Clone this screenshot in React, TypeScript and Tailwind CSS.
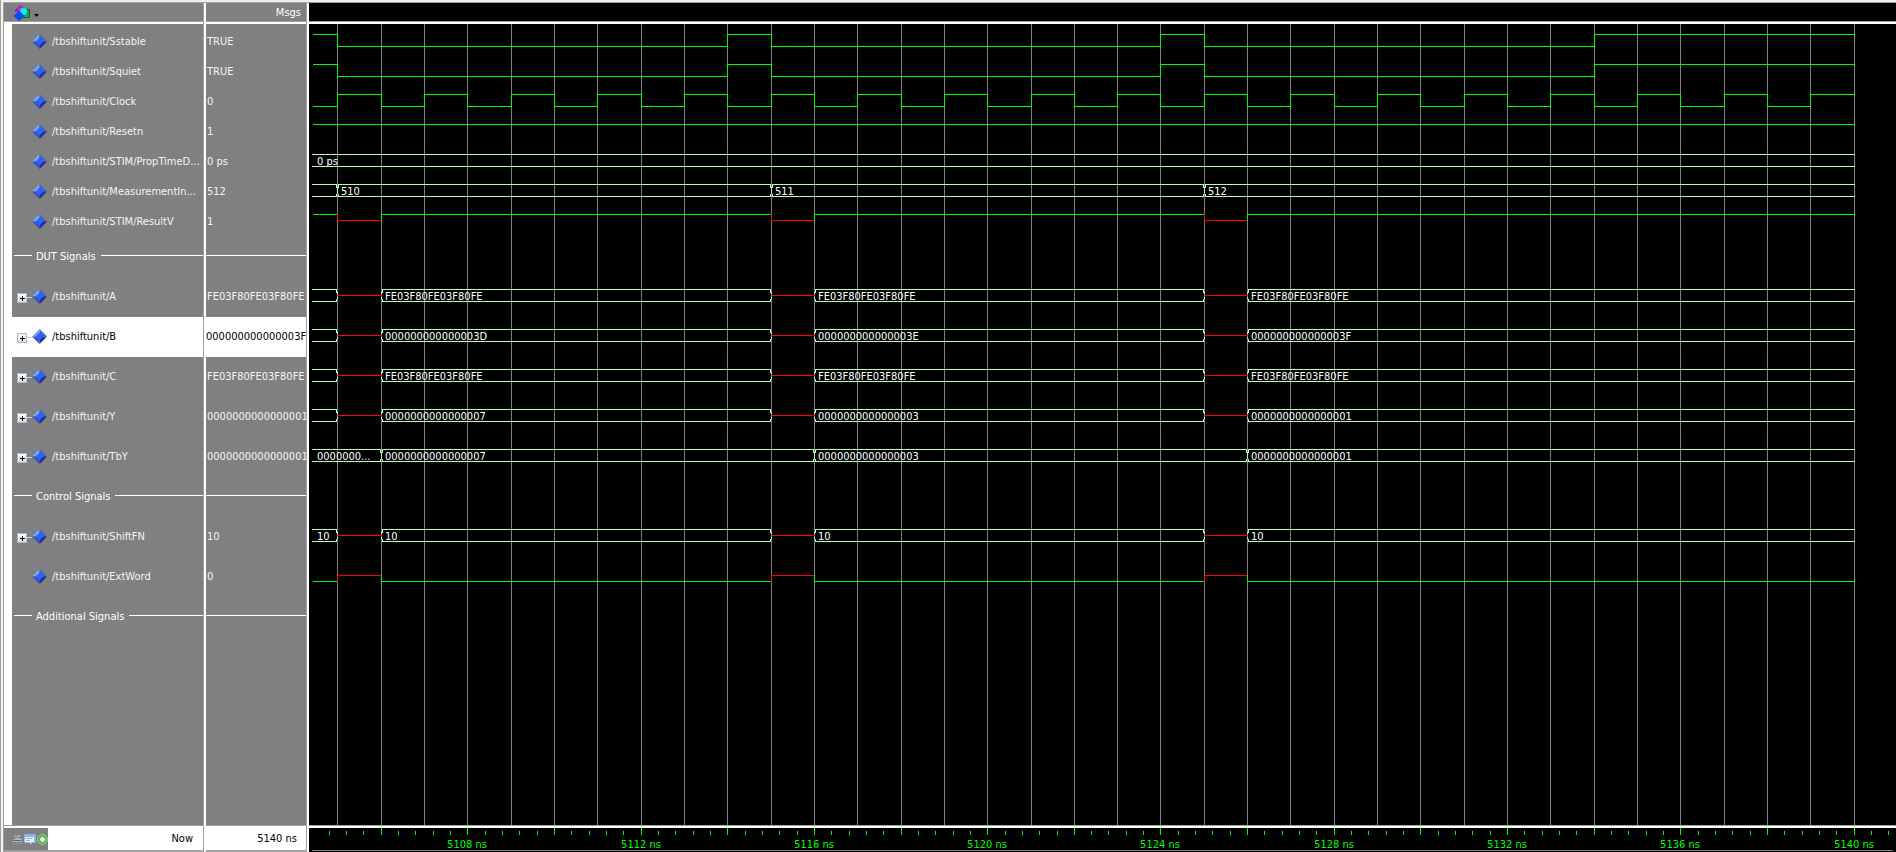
import React from "react";

type State = "0" | "1" | "x";
type Edge = [time: number, state: State];
type Span = [time: number, text: string | null];

interface Row {
  kind: "bit" | "bus" | "divider";
  name: string;
  value?: string;
  expandable?: boolean;
  selected?: boolean;
  tall?: boolean;
  edges?: Edge[];
  spans?: Span[];
}

const START = 5104;
const END = 5140;
const LIME = "#00ff00";
const PALE = "#b4ffb4";
const RED = "#ff0000";

const range = (from: number, to: number, step = 1) =>
  Array.from({ length: Math.floor((to - from) / step) + 1 }, (_, i) => from + i * step);

/* Time in ns to a pixel column of the wave pane. */
const xOf = (t: number) => (t <= START ? 4 : Math.round(28.4 + 43.32 * (t - 5105)));

const stable: Edge[] = [
  [START, "1"], [5105, "0"], [5114, "1"], [5115, "0"], [5124, "1"], [5125, "0"], [5134, "1"],
];
const clock: Edge[] = range(START, END - 1).map((t): Edge => [t, t % 2 ? "1" : "0"]);
const pulses = (s: State): Edge[] => [
  [START, s], [5105, "x"], [5106, s], [5115, "x"], [5116, s], [5125, "x"], [5126, s],
];
const gated = (first: string, a: string, b: string, c: string): Span[] => [
  [START, first], [5105, null], [5106, a], [5115, null], [5116, b], [5125, null], [5126, c],
];

const A = "FE03F80FE03F80FE";
const Z = "000000000000000";

const ROWS: Row[] = [
  { kind: "bit", name: "/tbshiftunit/Sstable", value: "TRUE", edges: stable },
  { kind: "bit", name: "/tbshiftunit/Squiet", value: "TRUE", edges: stable },
  { kind: "bit", name: "/tbshiftunit/Clock", value: "0", edges: clock },
  { kind: "bit", name: "/tbshiftunit/Resetn", value: "1", edges: [[START, "1"]] },
  { kind: "bus", name: "/tbshiftunit/STIM/PropTimeD...", value: "0 ps", spans: [[START, "0 ps"]] },
  {
    kind: "bus", name: "/tbshiftunit/MeasurementIn...", value: "512",
    spans: [[START, ""], [5105, "510"], [5115, "511"], [5125, "512"]],
  },
  { kind: "bit", name: "/tbshiftunit/STIM/ResultV", value: "1", edges: pulses("1") },
  { kind: "divider", name: "DUT Signals", tall: true },
  { kind: "bus", name: "/tbshiftunit/A", value: A, expandable: true, tall: true, spans: gated("", A, A, A) },
  {
    kind: "bus", name: "/tbshiftunit/B", value: "000000000000003F", expandable: true, tall: true, selected: true,
    spans: gated("", "000000000000003D", "000000000000003E", "000000000000003F"),
  },
  { kind: "bus", name: "/tbshiftunit/C", value: A, expandable: true, tall: true, spans: gated("", A, A, A) },
  {
    kind: "bus", name: "/tbshiftunit/Y", value: Z + "1", expandable: true, tall: true,
    spans: gated("", Z + "7", Z + "3", Z + "1"),
  },
  {
    kind: "bus", name: "/tbshiftunit/TbY", value: Z + "1", expandable: true, tall: true,
    spans: [[START, "0000000..."], [5106, Z + "7"], [5116, Z + "3"], [5126, Z + "1"]],
  },
  { kind: "divider", name: "Control Signals", tall: true },
  {
    kind: "bus", name: "/tbshiftunit/ShiftFN", value: "10", expandable: true, tall: true,
    spans: gated("10", "10", "10", "10"),
  },
  { kind: "bit", name: "/tbshiftunit/ExtWord", value: "0", tall: true, edges: pulses("0") },
  { kind: "divider", name: "Additional Signals", tall: true },
];

function Diamond() {
  return (
    <svg className="size-[15px] shrink-0" viewBox="0 0 15 15" aria-hidden="true">
      <path d="M7.5 0 0 7.5h7.5z" fill="#7ba4f4" />
      <path d="M7.5 0 15 7.5H7.5z" fill="#3f62cc" />
      <path d="M0 7.5 7.5 15V7.5z" fill="#3c50bc" />
      <path d="M15 7.5 7.5 15V7.5z" fill="#27279c" />
      <path d="M7.5 3.5 11.5 7.5 7.5 11.5 3.5 7.5z" fill="#2468fb" />
    </svg>
  );
}

function Expander({ name }: { name: string }) {
  return (
    <button
      type="button"
      aria-label={`Expand ${name}`}
      className="flex size-[10px] shrink-0 items-center justify-center rounded-[1px] bg-linear-to-b from-white to-[#d5dbe6] shadow-[0_0_0_1px_#a9b4c6_inset]"
    >
      <svg className="size-[10px]" viewBox="0 0 10 10" shapeRendering="crispEdges" aria-hidden="true">
        <path d="M5.5 3v5M3 5.5h5" stroke="#000" />
      </svg>
    </button>
  );
}

function NameRow({ row }: { row: Row }) {
  if (row.kind === "divider") {
    return (
      <div className="flex h-10 items-center pb-[3px] pl-[2px] text-white">
        <span className="h-px w-[18px] bg-white" />
        <span className="px-1 pt-[2px]">{row.name}</span>
        <span className="ml-px h-px grow bg-white" />
      </div>
    );
  }
  const tone = row.selected ? "bg-white text-black" : "text-[#f4f4f4]";
  return (
    <div className={`flex items-center pb-px pl-[5px] ${row.tall ? "h-10" : "h-[30px]"} ${tone}`}>
      <span className="flex w-[15px] items-center pt-[2px]">
        {row.expandable && (
          <>
            <Expander name={row.name} />
            <span className="h-px grow bg-[#d4d4d4]" />
          </>
        )}
      </span>
      <Diamond />
      <span className="pl-[5px]">{row.name}</span>
    </div>
  );
}

function ValueRow({ row }: { row: Row }) {
  if (row.kind === "divider") {
    return (
      <div className="flex h-10 items-center pb-[3px]">
        <span className="h-px grow bg-white" />
      </div>
    );
  }
  const tone = row.selected ? "bg-white text-black" : "text-[#f4f4f4]";
  return <div className={`flex items-center pb-px ${row.tall ? "h-10" : "h-[30px]"} ${tone}`}>{row.value}</div>;
}

function BitWave({ edges, top }: { edges: Edge[]; top: number }) {
  const level = { "1": top + 0.5, x: top + 6.5, "0": top + 12.5 };
  return (
    <>
      {edges.map(([t, s], i) => {
        const x = xOf(t) + 0.5;
        const end = xOf(i + 1 < edges.length ? edges[i + 1][0] : END) + 0.5;
        const from = i > 0 ? level[edges[i - 1][1]] : level[s];
        return (
          <path
            key={t}
            d={`M${x} ${from}V${level[s]}H${end}`}
            fill="none"
            stroke={s === "x" ? RED : LIME}
            strokeLinecap="square"
          />
        );
      })}
    </>
  );
}

function BusWave({ spans, top }: { spans: Span[]; top: number }) {
  const hi = top + 0.5;
  const lo = top + 12.5;
  return (
    <>
      {spans.map(([t, text], i) => {
        const x = xOf(t) + 0.5;
        const last = i + 1 >= spans.length;
        const end = xOf(last ? END : spans[i + 1][0]) + 0.5;
        if (text === null) {
          return <path key={t} d={`M${x} ${top + 6.5}H${end}`} stroke={RED} />;
        }
        const left = i > 0 ? x + 1 : x - 1;
        const right = last ? end : end - 1;
        const meets = i > 0 && spans[i - 1][1] !== null;
        return (
          <g key={t} fill="none" stroke={PALE}>
            <path d={`M${left - 0.5} ${hi}H${right + 0.5}M${left - 0.5} ${lo}H${right + 0.5}`} />
            {i > 0 && <path d={`M${left} ${hi}v3M${left} ${lo}v-3M${x} ${hi + 2.5}v2M${x} ${lo - 2.5}v-2`} />}
            {meets && <path d={`M${x} ${hi + 2.5}V${lo - 2.5}`} />}
            {!last && <path d={`M${right} ${hi}v3M${right} ${lo}v-3M${end} ${hi + 2.5}v2M${end} ${lo - 2.5}v-2`} />}
            <text x={xOf(t) + 4} y={top + 11} fill="#fff" stroke="none">
              {text}
            </text>
          </g>
        );
      })}
    </>
  );
}

function WaveRow({ row }: { row: Row }) {
  const top = row.tall ? 12 : 7;
  return (
    <svg className={`block w-full ${row.tall ? "h-10" : "h-[30px]"}`} shapeRendering="crispEdges">
      {row.edges && <BitWave edges={row.edges} top={top} />}
      {row.spans && <BusWave spans={row.spans} top={top} />}
    </svg>
  );
}

function Grid() {
  return (
    <svg className="absolute inset-0 h-full w-full" shapeRendering="crispEdges" aria-hidden="true">
      {range(5105, END).map((t) => (
        <line key={t} x1={xOf(t) + 0.5} x2={xOf(t) + 0.5} y1="0" y2="100%" stroke="#808080" />
      ))}
    </svg>
  );
}

function Timeline() {
  return (
    <svg className="block h-6 w-full" shapeRendering="crispEdges">
      {range(0, 90).map((i) => {
        const x = xOf(5104.8 + i * 0.4) + 0.5;
        return <line key={i} x1={x} x2={x} y1={i % 5 === 3 ? 0 : 3} y2={7} stroke={LIME} />;
      })}
      {range(5108, END, 4).map((t) => (
        <text key={t} x={xOf(t)} y={20} textAnchor="middle" fill={LIME}>
          {t} ns
        </text>
      ))}
      <path d="M3 22.5H1584" stroke="#808080" />
    </svg>
  );
}

function Column({
  className,
  header,
  footer,
  children,
}: {
  className: string;
  header: React.ReactNode;
  footer: React.ReactNode;
  children: React.ReactNode;
}) {
  return (
    <section className={`flex flex-col ${className}`}>
      <div className="h-[18px]">{header}</div>
      <div className="h-[3px] border-t border-[#a0a0a0] bg-white" />
      <div className="flex grow flex-col">{children}</div>
      <div className="h-[3px] border-t border-[#a0a0a0] bg-white" />
      <div className="h-6">{footer}</div>
    </section>
  );
}

export default function App() {
  return (
    <main className="flex min-h-screen border-l border-[#a0a0a0] bg-[#f0f0f0] pt-[2px] pl-[2px] font-['DejaVu_Sans_Condensed','DejaVu_Sans',sans-serif] text-[11px] leading-[14px]">
      <div className="flex min-w-0 grow gap-[2px] border-t border-l border-[#a0a0a0] bg-white whitespace-nowrap">
        <Column
          className="w-[200px] shrink-0 border-r border-[#a0a0a0]"
          header={
            <div className="flex h-full bg-[#808080] pl-[9px]">
              <button type="button" aria-label="Signal filter" className="flex items-center gap-[3px]">
                <svg className="size-[18px]" viewBox="0 0 18 18" aria-hidden="true">
                  <path d="M7.5 2.5 2 8h10z" fill="#d42be0" stroke="#7b1690" />
                  <path d="M9 6.5h7.5v8H9z" fill="#12a84c" stroke="#0b6c32" />
                  <circle cx="10.5" cy="8.5" r="3.5" fill="#18e6fb" />
                  <path d="M6 7.5 11.5 13 6 18 .5 13z" fill="#0b50ee" />
                </svg>
                <svg className="mt-[6px] h-[3px] w-[5px]" viewBox="0 0 5 3" aria-hidden="true">
                  <path d="M0 0h5L2.5 3z" fill="#000" />
                </svg>
              </button>
            </div>
          }
          footer={
            <div className="flex h-full border-b-2 border-[#a0a0a0] bg-white">
              <div className="flex w-11 items-center gap-px bg-[#808080] pl-[8px]">
                <button type="button" aria-label="Find">
                  <svg className="size-[11px]" viewBox="0 0 11 11" aria-hidden="true">
                    <path d="M1 7 3 1.5h1.5L5.5 4 6.5 1H8l2 6v1H1z" fill="#b4b8bc" />
                    <path d="M2 4h2.5M6.5 3.5h2.5M1.5 6.5h8" stroke="#5d6064" />
                    <path d="M0 9.5h10" stroke="#5a9ae0" />
                  </svg>
                </button>
                <button type="button" aria-label="Edit list">
                  <svg className="h-[11px] w-3" viewBox="0 0 12 11" aria-hidden="true">
                    <rect width="12" height="9" rx="1" fill="#8db6ee" />
                    <rect x="1" y="3" width="9" height="5" fill="#e4effc" />
                    <path d="M2 4.5h6M2 6.5h4" stroke="#9bb7dc" />
                    <path d="M5 8h3l-1 3z" fill="#b9d2f3" />
                  </svg>
                </button>
                <button type="button" aria-label="Add cursor">
                  <svg className="size-[11px]" viewBox="0 0 11 11" aria-hidden="true">
                    <circle cx="5.5" cy="5.5" r="5" fill="#58b858" stroke="#8fd08f" />
                    <path d="M5.5 3v5M3 5.5h5" stroke="#fff" strokeWidth="2" />
                  </svg>
                </button>
              </div>
              <span className="flex grow items-center justify-end pr-[10px] text-black">Now</span>
            </div>
          }
        >
          <div className="flex grow flex-col pl-2">
            <div className="grow bg-[#808080] pt-[3px]">
              {ROWS.map((row) => (
                <NameRow key={row.name} row={row} />
              ))}
            </div>
          </div>
        </Column>

        <Column
          className="w-[101px] shrink-0 border-r border-[#a0a0a0]"
          header={
            <div className="flex h-full items-center justify-end bg-[#808080] pt-[2px] pr-[5px] text-white">Msgs</div>
          }
          footer={
            <div className="flex h-full items-center justify-end border-b-2 border-[#a0a0a0] bg-white pr-[9px] text-black">
              5140 ns
            </div>
          }
        >
          <div className="grow bg-[#808080] pt-[3px] pl-px">
            {ROWS.map((row) => (
              <div key={row.name} className={row.kind === "divider" || row.selected ? "-ml-px" : ""}>
                <ValueRow row={row} />
              </div>
            ))}
          </div>
        </Column>

        <Column
          className="min-w-0 grow"
          header={<div className="h-full bg-black" />}
          footer={
            <div className="h-full overflow-hidden bg-black">
              <Timeline />
            </div>
          }
        >
          <div className="relative grow overflow-hidden bg-black pt-[3px]">
            <Grid />
            <div className="relative">
              {ROWS.map((row) => (
                <WaveRow key={row.name} row={row} />
              ))}
            </div>
          </div>
        </Column>
      </div>
    </main>
  );
}
